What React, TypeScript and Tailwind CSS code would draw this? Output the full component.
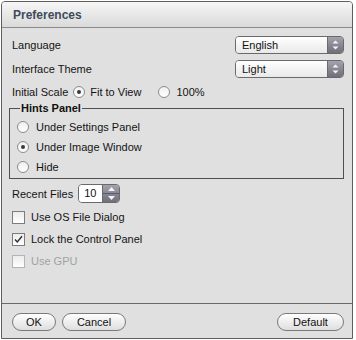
import type { ReactNode } from 'react'

const font = { fontFamily: '"Liberation Sans", Arial, sans-serif' }

function Arrows({ className }: { className?: string }) {
  return (
    <svg width="7" height="10" viewBox="0 0 7 10" className={className}>
      <path d="M3.5 0.5 L6.5 3.5 L0.5 3.5 Z" fill="#f4f4f6" />
      <path d="M3.5 9.5 L6.5 6.5 L0.5 6.5 Z" fill="#f4f4f6" />
    </svg>
  )
}

function Select({ value }: { value: string }) {
  return (
    <div className="flex h-[18px] w-[109px] overflow-hidden rounded-[4px] border border-[#6a6a6a]">
      <div className="flex flex-1 items-center bg-gradient-to-b from-white to-[#e9e9e9] pl-[6px] text-[11px] text-[#111]">
        {value}
      </div>
      <div className="flex w-[16px] items-center justify-center border-l border-[#6a6a6a] bg-gradient-to-b from-[#a3a3ad] to-[#6f6f7b]">
        <Arrows />
      </div>
    </div>
  )
}

function Radio({ checked }: { checked?: boolean }) {
  return (
    <span className="flex h-[12px] w-[12px] shrink-0 items-center justify-center rounded-full border border-[#8c8c8c] bg-gradient-to-b from-[#f0f0f0] to-white">
      {checked && <span className="h-[4px] w-[4px] rounded-full bg-[#3a3a3a]" />}
    </span>
  )
}

function Check({ checked, disabled }: { checked?: boolean; disabled?: boolean }) {
  return (
    <span
      className={`flex h-[13px] w-[13px] shrink-0 items-center justify-center border bg-gradient-to-b from-[#ececec] to-white ${
        disabled ? 'border-[#b4b4b4]' : 'border-[#7c7c7c]'
      }`}
    >
      {checked && (
        <svg width="9" height="9" viewBox="0 0 9 9">
          <path d="M1 4.5 L3.3 7 L8 1.2" fill="none" stroke="#2c2c2c" strokeWidth="1.4" />
        </svg>
      )}
    </span>
  )
}

function Button({ children, w }: { children: ReactNode; w: string }) {
  return (
    <button
      className={`flex h-[18px] ${w} items-center justify-center rounded-full border border-[#7a7a7a] bg-gradient-to-b from-white to-[#dedede] text-[11px] text-[#111]`}
    >
      {children}
    </button>
  )
}

export default function App() {
  return (
    <div className="h-[340px] w-[356px] bg-white pl-[1px] pt-[1px]" style={font}>
      <div className="flex h-[338px] w-[352px] flex-col overflow-hidden rounded-t-[4px] border border-[#5e5e5e] bg-[#e0e0e0] text-[11px] text-[#141414]">
        <div className="flex h-[26px] items-center border-b border-[#8a8a8a] bg-gradient-to-b from-[#f6f6f6] to-[#dadada] pl-[11px] pt-[1px] text-[12px] font-bold text-[#3e4b5b]">
          Preferences
        </div>

        <div className="flex flex-1 flex-col pl-[10px] pr-[8px] pt-[8px]">
          <div className="flex h-[18px] items-center justify-between">
            <span className="pt-[1px]">Language</span>
            <Select value="English" />
          </div>
          <div className="mt-[6px] flex h-[18px] items-center justify-between">
            <span className="pt-[1px]">Interface Theme</span>
            <Select value="Light" />
          </div>

          <div className="mt-[7px] flex h-[14px] items-center">
            <span>Initial Scale</span>
            <span className="ml-[5px]">
              <Radio checked />
            </span>
            <span className="ml-[5px]">Fit to View</span>
            <span className="ml-[17px]">
              <Radio />
            </span>
            <span className="ml-[6px]">100%</span>
          </div>

          <fieldset className="-ml-[3px] mt-[2px] border border-[#505050] pb-[1px] pl-[7px]">
            <legend className="ml-[3px] px-[1px] text-[11px] font-bold leading-[14px] text-[#111]">
              Hints Panel
            </legend>
            <div className="mt-[2px] flex flex-col">
              {[
                ['Under Settings Panel', false],
                ['Under Image Window', true],
                ['Hide', false],
              ].map(([label, on]) => (
                <div key={label as string} className="flex h-[20px] items-center gap-[7px]">
                  <Radio checked={on as boolean} />
                  <span>{label}</span>
                </div>
              ))}
            </div>
          </fieldset>

          <div className="mt-[5px] flex h-[19px] items-center">
            <span className="pt-[1px]">Recent Files</span>
            <div className="ml-[5px] flex h-[19px] w-[42px] overflow-hidden rounded-[4px] border border-[#6a6a6a]">
              <div className="flex flex-1 items-center bg-white pl-[5px] text-[#111]">10</div>
              <div className="flex w-[17px] flex-col border-l border-[#6a6a6a] bg-gradient-to-b from-[#a3a3ad] to-[#6f6f7b]">
                <div className="flex flex-1 items-center justify-center border-b border-[#5c5c66]">
                  <svg width="7" height="4" viewBox="0 0 7 4">
                    <path d="M3.5 0 L7 4 L0 4 Z" fill="#f4f4f6" />
                  </svg>
                </div>
                <div className="flex flex-1 items-center justify-center">
                  <svg width="7" height="4" viewBox="0 0 7 4">
                    <path d="M3.5 4 L7 0 L0 0 Z" fill="#f4f4f6" />
                  </svg>
                </div>
              </div>
            </div>
          </div>

          <div className="mt-[3px] flex flex-col">
            <div className="flex h-[22px] items-center gap-[6px]">
              <Check />
              <span>Use OS File Dialog</span>
            </div>
            <div className="flex h-[22px] items-center gap-[6px]">
              <Check checked />
              <span>Lock the Control Panel</span>
            </div>
            <div className="flex h-[22px] items-center gap-[6px] text-[#a2a2a2]">
              <Check disabled />
              <span>Use GPU</span>
            </div>
          </div>
        </div>

        <div className="flex h-[35px] items-start justify-between border-t border-[#6a6a6a] pl-[10px] pr-[8px] pt-[9px]">
          <div className="flex gap-[6px]">
            <Button w="w-[44px]">OK</Button>
            <Button w="w-[64px]">Cancel</Button>
          </div>
          <Button w="w-[67px]">Default</Button>
        </div>
      </div>
    </div>
  )
}
